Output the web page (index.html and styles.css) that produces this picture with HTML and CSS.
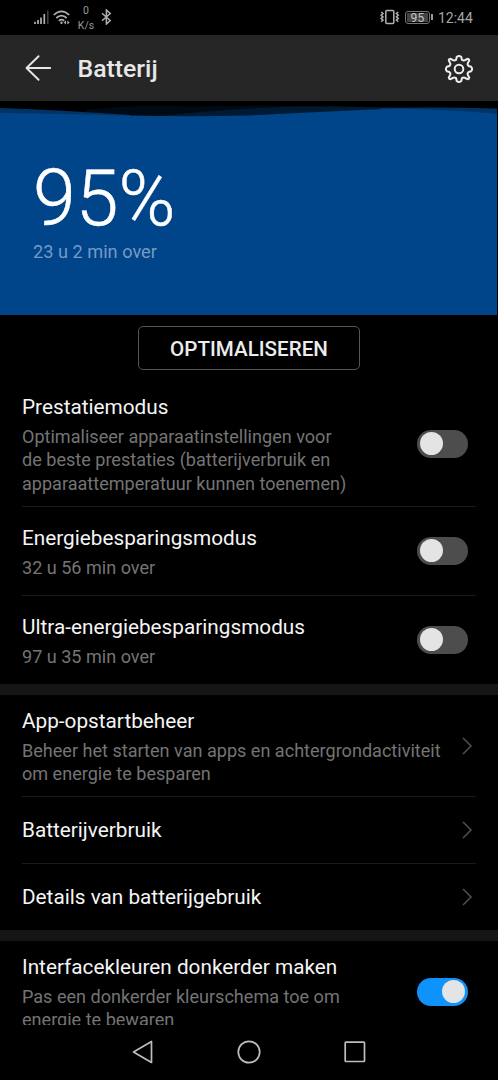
FILE: index.html
```html
<!DOCTYPE html>
<html lang="nl">
<head>
<meta charset="utf-8">
<title>Batterij</title>
<link rel="stylesheet" href="styles.css">
</head>
<body>
<div class="phone">
  <div class="status">
    <svg class="signal" width="16" height="16" viewBox="0 0 16 16"><path d="M2 11.800v2.200M5 10v4M8 7.500v6.500M11.300 4v10" stroke="#b0b0b0" stroke-width="1.700"/><path d="M14.800 .5v13.500" stroke="#444" stroke-width="1.500"/></svg>
    <svg class="wifi" width="18" height="16" viewBox="0 0 18 16" fill="none" stroke="#b0b0b0" stroke-width="1.700"><path d="M.8 5Q8.500-2.200 16.200 5M3.300 8Q8.500 3.400 13.700 8M5.800 10.800Q8.500 8.600 11.200 10.800"/><circle cx="8.500" cy="12.700" r="1.200" fill="#b0b0b0" stroke="none"/><path d="M13 10.500l-2.300 2 2.300 2zM14.300 10.500l2.300 2-2.300 2z" fill="#b0b0b0" stroke="none"/></svg>
    <div class="speed"><span>0</span><span>K/s</span></div>
    <svg class="bt" width="11" height="16" viewBox="0 0 11 16" fill="none" stroke="#b0b0b0" stroke-width="1.500"><path d="M1 4.300l8.200 7.200L5.400 15V1l3.800 3.500L1 11.700"/></svg>
    <div class="status-right">
      <svg class="vibrate" width="20" height="16" viewBox="0 0 20 16" fill="none" stroke="#b0b0b0" stroke-width="1.500"><rect x="5.800" y="1.500" width="8" height="13" rx="1"/><path d="M1.200 3l1.800 1.600-1.800 1.600L3 7.900 1.200 9.500 3 11.100l-1.800 1.600M18.200 3l-1.800 1.600 1.800 1.600-1.800 1.700 1.800 1.600-1.800 1.600 1.800 1.600"/></svg>
      <div class="battery"><span class="battery-level">95</span></div><i class="battery-tip"></i>
      <span class="clock">12:44</span>
    </div>
  </div>
  <header class="bar">
    <svg class="back" width="28" height="28" viewBox="0 0 28 28" fill="none" stroke="#e6e6e6" stroke-width="1.900" stroke-linecap="round" stroke-linejoin="round"><path d="M14.600 2.200L2.500 14l12.100 11.800M2.500 14h23.700"/></svg>
    <h1>Batterij</h1>
    <svg class="gear" width="30" height="30" viewBox="-15 -15 30 30" fill="none" stroke="#ececec" stroke-width="2" stroke-linejoin="round"><circle r="4.300"/><path d="M-2.300-12Q0-14 2.300-12L2.900-9.200Q4.800-8 6.200-9L8.500-10.200Q10.300-9.900 10.200-8.500L9-6.200Q8-4.400 9.600-3L12.200-2.200Q14 0 12.200 2.200L9.600 3Q8 4.400 9 6.200L10.200 8.500Q10.300 9.900 8.500 10.200L6.200 9Q4.800 8 2.900 9.200L2.300 12Q0 14-2.300 12L-2.900 9.200Q-4.800 8-6.200 9L-8.500 10.200Q-10.300 9.900-10.200 8.500L-9 6.200Q-8 4.400-9.600 3L-12.200 2.200Q-14 0-12.200-2.200L-9.600-3Q-8-4.400-9-6.200L-10.200-8.500Q-10.300-9.900-8.500-10.200L-6.200-9Q-4.800-8-2.900-9.200Z"/></svg>
  </header>
  <section class="hero">
    <svg class="waves" width="497" height="16" viewBox="0 0 497 16">
      <path d="M85 9Q135 3 190 5.500Q300 3.500 400 7V16H85z" fill="#000a14"/>
      <path d="M150 16Q230 7 300 5.500Q360 5 410 7V16z" fill="#001a34"/>
      <path d="M0 7Q60 9 130 14V16H0zM380 7Q440 6 497 7.500V16H380z" fill="#003466"/>
      <path d="M0 12Q70 13 130 14.500Q190 16 249 14.500Q330 10 400 7.500Q460 9 497 13V16H0z" fill="#00448a"/>
    </svg>
    <div class="percent">95%</div>
    <div class="remaining">23 u 2 min over</div>
  </section>
  <main class="list">
    <button class="optimise">OPTIMALISEREN</button>
    <div class="row first"><div class="text"><h2>Prestatiemodus</h2><p>Optimaliseer apparaatinstellingen voor<br>de beste prestaties (batterijverbruik en<br>apparaattemperatuur kunnen toenemen)</p></div><span class="toggle"></span></div>
    <div class="row mode"><div class="text"><h2>Energiebesparingsmodus</h2><p>32 u 56 min over</p></div><span class="toggle"></span></div>
    <div class="row mode last"><div class="text"><h2>Ultra-energiebesparingsmodus</h2><p>97 u 35 min over</p></div><span class="toggle"></span></div>
    <div class="band"></div>
    <div class="row launch"><div class="text"><h2>App-opstartbeheer</h2><p>Beheer het starten van apps en achtergrondactiviteit<br>om energie te besparen</p></div><svg class="chevron" width="12" height="20" viewBox="0 0 12 20"><path d="M2 2l8 8-8 8"/></svg></div>
    <div class="row single"><h2>Batterijverbruik</h2><svg class="chevron" width="12" height="20" viewBox="0 0 12 20"><path d="M2 2l8 8-8 8"/></svg></div>
    <div class="row single last"><h2>Details van batterijgebruik</h2><svg class="chevron" width="12" height="20" viewBox="0 0 12 20"><path d="M2 2l8 8-8 8"/></svg></div>
    <div class="band"></div>
    <div class="row dark last"><div class="text"><h2>Interfacekleuren donkerder maken</h2><p>Pas een donkerder kleurschema toe om<br>energie te bewaren</p></div><span class="toggle on"></span></div>
  </main>
  <nav class="nav">
    <svg width="24" height="26" viewBox="0 0 24 26"><path d="M20.500 2.500v21L2.500 13z"/></svg>
    <svg width="26" height="26" viewBox="0 0 26 26"><circle cx="13" cy="13" r="10.700"/></svg>
    <svg width="24" height="26" viewBox="0 0 24 26"><rect x="2.200" y="3.200" width="19.300" height="19.300" rx=".8"/></svg>
  </nav>
</div>
</body>
</html>
```
FILE: styles.css
```css
* { box-sizing: border-box; }
body { margin: 0; background: #000; font-family: Roboto, "Liberation Sans", sans-serif; }
h1, h2, p { margin: 0; font-weight: 400; }
svg { display: block; flex: none; }
.phone { display: flex; flex-direction: column; width: 498px; height: 1080px; overflow: hidden; background: #000; color: #f5f5f5; }
.status { display: flex; flex: none; height: 35px; padding: 0 26px 0 33px; color: #a6a6a6; }
.signal { margin-top: 10px; }
.wifi { margin: 10px 0 0 4px; }
.speed { display: flex; flex-direction: column; align-items: center; width: 18px; margin: 3px 0 0 6px; font-size: 10.5px; line-height: 15px; color: #999; }
.bt { margin: 9px 0 0 6px; }
.status-right { display: flex; margin-left: auto; }
.vibrate { margin-top: 9px; }
.battery { width: 25px; height: 13px; margin: 11px 0 0 5px; padding: 1px; border: 1px solid #777; border-radius: 3px; }
.battery-level { display: block; height: 9px; background: #444; color: #c4c4c4; font-size: 12px; line-height: 10px; letter-spacing: .3px; text-align: center; }
.battery-tip { width: 2px; height: 6px; margin: 14px 5px 0 1px; background: #999; }
.clock { width: 34px; margin-top: 8px; font-size: 15.500px; line-height: 20px; white-space: nowrap; transform: scaleX(.9); transform-origin: 0 50%; }
.bar { display: flex; flex: none; height: 66px; align-items: center; padding: 0 24px; background: #262626; }
.bar h1 { margin-top: 2px; margin-left: 25.500px; font-size: 24.800px; font-weight: 500; line-height: 30px; color: #e8e8e8; }
.gear { margin-left: auto; margin-top: 2px; }
.hero { flex: none; width: 497px; height: 214px; background: #00448a; }
.waves { background: #000; }
.percent { margin: 37px 0 0 33px; font-size: 77px; font-weight: 300; line-height: 90px; color: #fff; -webkit-text-stroke: .5px #fff; }
.remaining { margin-top: -2px; margin-left: 33px; font-size: 18.200px; line-height: 20px; color: #759ac3; }
.list { display: flex; flex-direction: column; flex: none; height: 710px; overflow: hidden; }
.optimise { align-self: center; flex: none; width: 222px; height: 44px; margin-top: 11px; padding: 1px 0 0; border: 1px solid #555; border-radius: 5px; background: none; color: #ececec; font: 500 20.600px Roboto, sans-serif; }
.row { display: flex; flex: none; justify-content: space-between; align-items: flex-start; margin: 0 22px; border-bottom: 1px solid #1b1b1b; }
.row h2 { font-size: 20.750px; line-height: 26px; white-space: nowrap; }
.row p { margin-top: 4.500px; font-size: 18.070px; line-height: 23.500px; color: #747474; white-space: nowrap; }
.first { height: 137px; padding-top: 24px; }
.mode { height: 89px; padding-top: 18px; }
.launch { height: 102px; padding-top: 13px; }
.single { height: 67px; align-items: center; }
.dark { height: 110px; padding-top: 13px; }
.mode.last { height: 88px; }
.single.last { height: 66px; }
.row.last { border-bottom: 0; }
.band { flex: none; height: 11px; background: #151515; }
.toggle { flex: none; display: flex; align-items: center; width: 51px; height: 28px; margin-right: 8px; padding: 0 3px; border-radius: 14px; background: #4d4d4d; }
.toggle::before { content: ""; width: 23px; height: 23px; border-radius: 50%; background: #e4e4e4; }
.toggle.on { justify-content: flex-end; background: #0d93fb; }
.first .toggle { margin-top: 35.500px; }
.mode .toggle { margin-top: 11.700px; }
.dark .toggle { margin-top: 23.500px; }
.chevron { margin-right: 3px; fill: none; stroke: #505050; stroke-width: 1.500; }
.launch .chevron { margin-top: 27.500px; }
.nav { display: flex; flex: none; height: 56px; align-items: center; justify-content: center; gap: 81px; padding-bottom: 2px; }
.nav svg { fill: none; stroke: #bdbdbd; stroke-width: 1.700; stroke-linejoin: round; }
```
